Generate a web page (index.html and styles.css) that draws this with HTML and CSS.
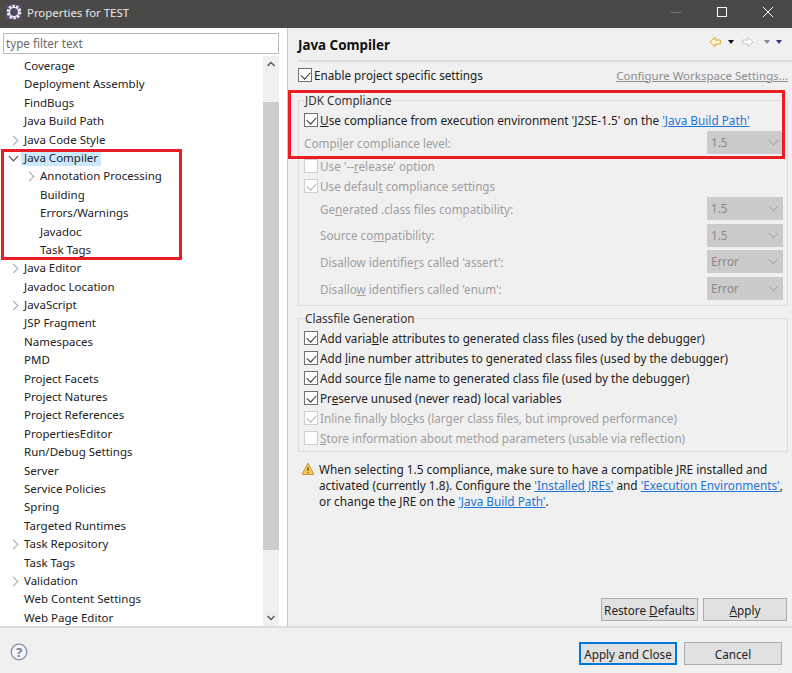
FILE: index.html
```html
<!DOCTYPE html>
<html lang="en">
<head>
<meta charset="utf-8">
<title>Properties for TEST</title>
<link rel="stylesheet" href="styles.css">
</head>
<body>
<div class="window">
  <header class="titlebar">
    <svg class="appicon" width="16" height="16" viewBox="0 0 16 16"><rect x="0.5" y="0.5" width="15" height="15" fill="#5b4a80"/><circle cx="8" cy="8" r="6" fill="none" stroke="#f0f0f0" stroke-width="2.6" stroke-dasharray="2.4 1.31"/><circle cx="8" cy="8" r="4.6" fill="#4c4a5e" stroke="#f4f4f4" stroke-width="1.3"/></svg>
    <span class="title">Properties for TEST</span>
    <span class="winctl"><span class="min"></span><span class="max"></span>
      <svg width="10" height="10" viewBox="0 0 10 10"><path d="M0 0l10 10M10 0L0 10" stroke="#fff" stroke-width="1"/></svg></span>
  </header>
  <div class="main">
    <aside class="left">
      <div class="filter">type filter text</div>
      <div class="treewrap">
        <ul class="tree">
          <li>Coverage</li>
          <li>Deployment Assembly</li>
          <li>FindBugs</li>
          <li>Java Build Path</li>
          <li class="arrow">Java Code Style</li>
          <li class="open"><span class="sel">Java Compiler</span></li>
          <li class="sub arrow">Annotation Processing</li>
          <li class="sub">Building</li>
          <li class="sub">Errors/Warnings</li>
          <li class="sub">Javadoc</li>
          <li class="sub">Task Tags</li>
          <li class="arrow">Java Editor</li>
          <li>Javadoc Location</li>
          <li class="arrow">JavaScript</li>
          <li>JSP Fragment</li>
          <li>Namespaces</li>
          <li>PMD</li>
          <li>Project Facets</li>
          <li>Project Natures</li>
          <li>Project References</li>
          <li>PropertiesEditor</li>
          <li>Run/Debug Settings</li>
          <li>Server</li>
          <li>Service Policies</li>
          <li>Spring</li>
          <li>Targeted Runtimes</li>
          <li class="arrow">Task Repository</li>
          <li>Task Tags</li>
          <li class="arrow">Validation</li>
          <li>Web Content Settings</li>
          <li>Web Page Editor</li>
        </ul>
        <div class="scrollbar">
          <svg width="16" height="16" viewBox="0 0 16 16"><path d="M4.5 10L8 6.5l3.5 3.5" fill="none" stroke="#555" stroke-width="1.4"/></svg>
          <div class="track"><div class="thumb"></div></div>
          <svg width="16" height="16" viewBox="0 0 16 16"><path d="M4.5 6L8 9.5 11.5 6" fill="none" stroke="#555" stroke-width="1.4"/></svg>
        </div>
      </div>
    </aside>
    <section class="right">
      <div class="heading">
        <h1>Java Compiler</h1>
        <div class="navicons">
          <svg class="nav-back" width="12" height="12" viewBox="0 0 12 12"><path d="M.8 6L6 1.2V4h5.3v4H6v2.8z" fill="#fff6d8" stroke="#e0a530"/></svg>
          <i class="tri blk"></i>
          <svg class="nav-fwd" width="12" height="12" viewBox="0 0 12 12"><path d="M11.2 6L6 1.2V4H.7v4H6v2.8z" fill="#f8f8f8" stroke="#c8c8c8"/></svg>
          <i class="tri gry"></i>
          <i class="tri pur"></i>
        </div>
      </div>
      <div class="enable">
        <label class="check on"><b class="box"></b>Enable project specific settings</label>
        <a class="conf">Configure Workspace Settings...</a>
      </div>
      <fieldset class="group jdk">
        <legend>JDK Compliance</legend>
        <label class="check on first"><b class="box"></b><span><u>U</u>se compliance from execution environment 'J2SE-1.5' on the <a class="lnk">'Java Build Path'</a></span></label>
        <div class="row dis"><span>Compi<u>l</u>er compliance level:</span><span class="combo">1.5</span></div>
        <label class="check dis r1"><b class="box"></b><span>Use '--<u>r</u>elease' option</span></label>
        <label class="check dis on r2"><b class="box"></b><span>Use defaul<u>t</u> compliance settings</span></label>
        <div class="row dis ind r3"><span>Ge<u>n</u>erated .class files compatibility:</span><span class="combo">1.5</span></div>
        <div class="row dis ind"><span>Source co<u>m</u>patibility:</span><span class="combo">1.5</span></div>
        <div class="row dis ind"><span>Disallow identifie<u>r</u>s called 'assert':</span><span class="combo">Error</span></div>
        <div class="row dis ind"><span>Disallo<u>w</u> identifiers called 'enum':</span><span class="combo">Error</span></div>
      </fieldset>
      <fieldset class="group cls">
        <legend>Classfile Generation</legend>
        <label class="check on"><b class="box"></b><span>Add varia<u>b</u>le attributes to generated class files (used by the debugger)</span></label>
        <label class="check on"><b class="box"></b><span>Add <u>l</u>ine number attributes to generated class files (used by the debugger)</span></label>
        <label class="check on"><b class="box"></b><span>Add source <u>f</u>ile name to generated class file (used by the debugger)</span></label>
        <label class="check on"><b class="box"></b><span>Pr<u>e</u>serve unused (never read) local variables</span></label>
        <label class="check on dis"><b class="box"></b><span>Inline finally blo<u>c</u>ks (larger class files, but improved performance)</span></label>
        <label class="check dis"><b class="box"></b><span><u>S</u>tore information about method parameters (usable via reflection)</span></label>
      </fieldset>
      <div class="warn">
        <svg width="14" height="14" viewBox="0 0 14 14"><path d="M7 1.2L13 12.5H1z" fill="#f5c95a" stroke="#c9973a" stroke-linejoin="round"/><path d="M7 5v4M7 10.2v1.2" stroke="#5a4a20" stroke-width="1.2"/></svg>
        <p>When selecting 1.5 compliance, make sure to have a compatible JRE installed and<br>activated (currently 1.8). Configure the <a class="lnk">'Installed JREs'</a> and <a class="lnk">'Execution Environments'</a>,<br>or change the JRE on the <a class="lnk">'Java Build Path'</a>.</p>
      </div>
      <div class="pagebtns">
        <button class="btn restore">Restore <u>D</u>efaults</button>
        <button class="btn apply"><u>A</u>pply</button>
      </div>
    </section>
  </div>
  <footer class="footer">
    <svg class="help" width="18" height="18" viewBox="0 0 18 18"><circle cx="9" cy="9" r="7.8" fill="#f4f6fa" stroke="#8293ae" stroke-width="1.3"/><text x="9" y="13.5" text-anchor="middle" class="q">?</text></svg>
    <div class="dlgbtns">
      <button class="btn def">Apply and Close</button>
      <button class="btn cancel">Cancel</button>
    </div>
  </footer>
  <div class="mark mark-tree"></div>
  <div class="mark mark-jdk"></div>
</div>
</body>
</html>
```
FILE: styles.css
```css
* { box-sizing: border-box; }
html, body { margin: 0; padding: 0; }
body { font-family: "Noto Sans", "Open Sans", sans-serif; font-size: 11.7px; color: #222; background: #f0f0f0; }
.window { position: relative; width: 792px; height: 673px; display: flex; flex-direction: column; overflow: hidden; background: #f0f0f0; }
.titlebar { height: 28px; flex: none; background: #4a4947; color: #e8e8e8; display: flex; align-items: center; padding: 0 0 4px 6px; font-size: 11.4px; }
.title { margin-left: 5px; }
.winctl { margin-left: auto; display: flex; align-items: center; gap: 36px; padding-right: 19px; }
.min { width: 10px; height: 1px; background: #777; }
.max { width: 10px; height: 10px; border: 1px solid #fff; }
.main { flex: none; height: 598px; display: flex; }
.left { width: 288px; flex: none; background: #fff; padding-top: 5px; border-right: 1px solid #c8c8c8; display: flex; flex-direction: column; }
.filter { margin-left: 3px; width: 276px; height: 21px; flex: none; border: 1px solid #bcbcbc; padding-left: 2px; line-height: 19px; color: #6a6a6a; }
.treewrap { flex: 1; display: flex; min-height: 0; padding-top: 3px; font-size: 11.5px; }
.tree { list-style: none; margin: 0; padding: 0; width: 263px; flex: none; overflow: hidden; }
.tree li { position: relative; height: 18.4px; line-height: 18.4px; padding-left: 24px; white-space: nowrap; }
.tree li.sub { padding-left: 40px; }
.sel { background: #cce8ff; display: inline-block; height: 16px; line-height: 16px; padding: 0 3px; margin-left: -3px; }
.tree li.arrow::before { content: ""; position: absolute; left: 10px; top: 6px; width: 6px; height: 6px; border-top: 1.4px solid #a6a6a6; border-right: 1.4px solid #a6a6a6; transform: rotate(45deg); }
.tree li.sub.arrow::before { left: 26px; }
.tree li.open::before { content: ""; position: absolute; left: 10px; top: 4px; width: 6px; height: 6px; border-bottom: 1.5px solid #444; border-right: 1.5px solid #444; transform: rotate(45deg); }
.scrollbar { width: 16px; flex: none; background: #f0f0f0; display: flex; flex-direction: column; margin-top: -1px; }
.scrollbar svg { flex: none; }
.track { flex: 1; padding-top: 30px; padding-bottom: 60px; display: flex; }
.thumb { flex: 1; background: #cdcdcd; }
.right { flex: 1; min-width: 0; padding: 0 4px 0 10px; display: flex; flex-direction: column; }
.heading { height: 34px; flex: none; display: flex; align-items: center; justify-content: space-between; margin-right: -4px; padding: 1px 0 0 0; border-bottom: 2px solid #dcdcdc; }
h1 { margin: 0; font-size: 13.4px; font-weight: 700; color: #111; }
.navicons { display: flex; align-items: center; margin-top: -5px; padding-right: 10px; }
.nav-back { margin-right: 7px; }
.nav-fwd { margin: 0 10px 0 8px; }
.tri { width: 0; height: 0; border-left: 3.5px solid transparent; border-right: 3.5px solid transparent; border-top: 4px solid #111; }
.tri.gry { border-top-color: #8a8a8a; }
.tri.pur { border-top-color: #4b2a80; margin-left: 6px; }
.enable { height: 26px; flex: none; display: flex; justify-content: space-between; align-items: center; }
.conf { color: #8d8d8d; text-decoration: underline; font-size: 11.5px; }
.check { display: flex; align-items: center; height: 20px; white-space: nowrap; }
.box { position: relative; width: 14px; height: 14px; flex: none; margin-right: 2px; border: 1px solid #707070; background: #fff; font-weight: 400; }
.check.on .box::after { content: ""; position: absolute; left: 2px; top: 1px; width: 8px; height: 5px; border-left: 1.4px solid #333; border-bottom: 1.4px solid #333; transform: rotate(-48deg) translate(-1px, 1px); }
.check.dis, .row.dis { color: #9e9e9e; }
.check.dis .box { border-color: #cfcfcf; }
.check.dis.on .box::after { border-color: #b0b0b0; }
.group { margin: 0; min-width: 0; flex: none; padding: 0 4px 0 5px; border: 1px solid #dcdcdc; }
.group legend { padding: 0 1px; margin-left: 0; line-height: 16px; color: #333; }
.jdk { height: 214px; margin-top: 4px; display: flex; flex-direction: column; padding-top: 3px; }
.jdk .first { height: 18px; font-size: 11.8px; }
.jdk .first + .row { margin-top: 2px; }
.row { display: flex; align-items: center; justify-content: space-between; height: 23px; margin-top: 3.7px; flex: none; }
.row.ind { padding-left: 16px; }
.combo { width: 76px; height: 23px; background: #cbcbcb; color: #8a8a8a; padding-left: 4px; line-height: 22px; position: relative; }
.combo::after { content: ""; position: absolute; right: 6px; top: 6px; width: 6px; height: 6px; border-right: 1px solid #a8a8a8; border-bottom: 1px solid #a8a8a8; transform: rotate(45deg); }
.r1 { margin-top: 2px; }
.r2 { margin-top: 0; }
.row.r3 { margin-top: 1px; }
.cls { height: 142px; margin-top: 4px; padding-top: 2px; }
.warn { display: flex; gap: 4px; margin: 9px 0 0 3px; flex: none; }
.warn svg { flex: none; margin-top: 1px; }
.warn p { margin: 0; line-height: 16px; color: #222; white-space: nowrap; font-size: 11.8px; }
.lnk { color: #1e74d6; text-decoration: underline; }
.pagebtns { margin-top: auto; display: flex; justify-content: flex-end; gap: 5px; padding-bottom: 5px; margin-right: 1px; }
.btn { font: inherit; color: #222; height: 23px; padding: 0; background: #e1e1e1; border: 1px solid #adadad; border-radius: 0; }
.restore { width: 97px; }
.apply { width: 84px; }
.footer { flex: 1; display: flex; align-items: center; justify-content: space-between; padding: 0 10px 0 10px; border-top: 2px solid #dcdcdc; }
.help { margin-top: 2px; }
.dlgbtns { display: flex; gap: 7px; margin-top: 6px; }
.def { width: 98px; border: 2px solid #0078d7; }
.cancel { width: 98px; }
.q { font-size: 13px; font-weight: 700; fill: #6f7f9a; }
.mark { position: absolute; border: 3px solid #ed1c24; pointer-events: none; }
.mark-tree { left: 1px; top: 149px; width: 181px; height: 111px; }
.mark-jdk { left: 288px; top: 90px; width: 497px; height: 69px; }
```
